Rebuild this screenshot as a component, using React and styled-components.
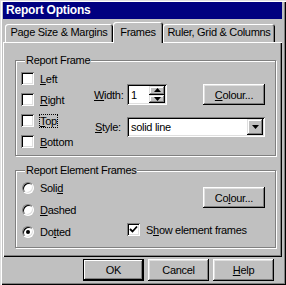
import React from 'react';
import styled, { createGlobalStyle } from 'styled-components';

const GlobalStyle = createGlobalStyle`
  html, body {
    margin: 0;
    padding: 0;
    background: #c0c0c0;
  }
  body {
    font-family: 'Liberation Sans', Arial, sans-serif;
    font-size: 11px;
    letter-spacing: -0.3px;
    color: #000;
  }
`;

// window chrome
const Window = styled.div`
  width: 286px;
  height: 285px;
  box-sizing: border-box;
  padding: 2px 4px 0 3px;
  background: #c0c0c0;
  box-shadow: inset 1px 1px #dfdfdf, inset 2px 2px #fff, inset -1px -1px #000, inset -2px -2px #808080;
  overflow: hidden;
`;

const TitleBar = styled.div`
  height: 17px;
  line-height: 17px;
  padding-left: 3px;
  background: #000080;
  color: #fff;
  font-weight: bold;
  font-size: 12px;
  letter-spacing: -0.2px;
`;

const TabStrip = styled.div`
  display: flex;
  align-items: flex-end;
  height: 23px;
  padding-left: 2px;
`;

const Tab = styled.div`
  position: relative;
  width: ${p => p.$w}px;
  height: ${p => (p.$active ? 21 : 18)}px;
  margin-bottom: ${p => (p.$active ? -1 : 0)}px;
  z-index: ${p => (p.$active ? 1 : 0)};
  box-sizing: border-box;
  display: flex;
  align-items: flex-end;
  justify-content: center;
  padding-bottom: ${p => (p.$active ? 4 : 3)}px;
  line-height: 13px;
  background: #c0c0c0;
  border-radius: 3px 3px 0 0;
  box-shadow: inset 1px 1px #fff, inset -1px 0 #000, inset -2px 0 #808080;
  white-space: nowrap;
`;

const Panel = styled.div`
  height: 215px;
  box-sizing: border-box;
  padding: 12px 6px 0 12px;
  box-shadow: inset 1px 1px #fff, inset -1px -1px #000, inset -2px -2px #808080;
  display: flex;
  flex-direction: column;
  gap: 8px;
`;

// group boxes
const Group = styled.fieldset`
  margin: 0;
  padding: 0;
  min-width: 0;
  border: 1px solid #808080;
  box-shadow: 1px 1px 0 #fff, inset 1px 1px 0 #fff;
`;

const Legend = styled.legend`
  margin-left: 9px;
  padding: 0 1px;
  line-height: 13px;
  background: #c0c0c0;
`;

const GroupBody = styled.div`
  display: flex;
  padding: ${p => p.$pad};
`;

const Column = styled.div`
  width: ${p => p.$w}px;
  display: flex;
  flex-direction: column;
  align-items: ${p => p.$align || 'stretch'};
  padding-top: ${p => p.$pt || 0}px;
`;

const OptionRow = styled.label`
  display: flex;
  align-items: center;
  height: ${p => p.$h}px;
  gap: ${p => p.$gap}px;
  align-self: flex-start;
  margin-top: ${p => p.$mt || 0}px;
`;

const Focus = styled.span`
  outline: 1px dotted #000;
  outline-offset: 0;
`;

// sunken controls
const sunken = `
  background: #fff;
  box-shadow: inset 1px 1px #808080, inset -1px -1px #fff, inset 2px 2px #000, inset -2px -2px #dfdfdf;
`;

const CheckBox = styled.span`
  ${sunken}
  width: 13px;
  height: 13px;
  flex: none;
  display: flex;
  align-items: center;
  justify-content: center;
`;

const Radio = styled.span`
  width: 12px;
  height: 12px;
  flex: none;
  box-sizing: border-box;
  border-radius: 50%;
  background: #fff;
  border: 1px solid;
  border-color: #808080 #fff #fff #808080;
  box-shadow: inset 1px 1px #000, inset -1px -1px #dfdfdf;
  display: flex;
  align-items: center;
  justify-content: center;

  &::after {
    content: '';
    width: 4px;
    height: 4px;
    border-radius: 50%;
    background: #000;
    display: ${p => (p.$on ? 'block' : 'none')};
  }
`;

const FieldRow = styled.div`
  display: flex;
  align-items: center;
  margin-top: ${p => p.$mt || 0}px;
`;

const FieldLabel = styled.span`
  width: ${p => p.$w}px;
  padding-left: ${p => p.$pl || 0}px;
  box-sizing: border-box;
  flex: none;
`;

const Field = styled.div`
  ${sunken}
  width: ${p => p.$w}px;
  height: ${p => p.$h}px;
  box-sizing: border-box;
  padding: 2px 2px 2px 4px;
  display: flex;
  align-items: center;
  justify-content: space-between;
`;

const SpinButtons = styled.div`
  display: flex;
  flex-direction: column;
  width: 16px;
  height: 100%;
`;

const SmallButton = styled.div`
  flex: ${p => (p.$fixed ? 'none' : 1)};
  width: 16px;
  height: ${p => (p.$fixed ? '16px' : 'auto')};
  background: #c0c0c0;
  display: flex;
  align-items: center;
  justify-content: center;
  box-shadow: inset -1px -1px #000, inset 1px 1px #dfdfdf, inset -2px -2px #808080, inset 2px 2px #fff;
`;

const Button = styled.button`
  width: ${p => p.$w}px;
  height: ${p => p.$h}px;
  margin: 0 0 0 ${p => (p.$push ? 'auto' : '0')};
  padding: 0;
  border: none;
  background: #c0c0c0;
  font: inherit;
  letter-spacing: inherit;
  color: #000;
  box-shadow: ${p =>
    p.$default
      ? 'inset 0 0 0 1px #000, inset -2px -2px #000, inset 2px 2px #fff, inset -3px -3px #808080'
      : 'inset -1px -1px #000, inset 1px 1px #fff, inset -2px -2px #808080, inset 2px 2px #dfdfdf'};
`;

const ButtonBar = styled.div`
  display: flex;
  justify-content: flex-end;
  gap: 4px;
  padding: 2px 8px 0 0;
`;

const Up = () => (
  <svg width="7" height="4" viewBox="0 0 7 4"><polygon points="3.5,0 7,4 0,4" fill="#000" /></svg>
);

const Down = () => (
  <svg width="7" height="4" viewBox="0 0 7 4"><polygon points="0,0 7,0 3.5,4" fill="#000" /></svg>
);

const Check = () => (
  <svg width="9" height="9" viewBox="0 0 9 9">
    <polyline points="1,4 3.5,6.5 8,1.5" fill="none" stroke="#000" strokeWidth="1.8" />
  </svg>
);

const frameSides = [
  { key: 'l', before: '', u: 'L', after: 'eft' },
  { key: 'r', before: '', u: 'R', after: 'ight' },
  { key: 't', before: '', u: 'T', after: 'op', focus: true },
  { key: 'b', before: '', u: 'B', after: 'ottom' },
];

const elementFrames = [
  { key: 's', before: 'Soli', u: 'd', after: '' },
  { key: 'd', before: '', u: 'D', after: 'ashed' },
  { key: 'o', before: 'Do', u: 't', after: 'ted', on: true },
];

const Mnemonic = ({ before, u, after }) => (
  <span>{before}<u>{u}</u>{after}</span>
);

export default function App() {
  return (
    <>
      <GlobalStyle />
      <Window>
        <TitleBar>Report Options</TitleBar>
        <TabStrip>
          <Tab $w={108}>Page Size &amp; Margins</Tab>
          <Tab $w={50} $active>Frames</Tab>
          <Tab $w={112}>Ruler, Grid &amp; Columns</Tab>
        </TabStrip>
        <Panel>
          <Group>
            <Legend>Report Frame</Legend>
            <GroupBody $pad="1px 0 3px 5px">
              <Column $w={73}>
                {frameSides.map(s => (
                  <OptionRow key={s.key} $h={21} $gap={6}>
                    <CheckBox />
                    {s.focus ? (
                      <Focus><Mnemonic {...s} /></Focus>
                    ) : (
                      <Mnemonic {...s} />
                    )}
                  </OptionRow>
                ))}
              </Column>
              <Column $w={171} $pt={16}>
                <FieldRow>
                  <FieldLabel $w={33}><u>W</u>idth:</FieldLabel>
                  <Field $w={40} $h={21}>
                    <span>1</span>
                    <SpinButtons>
                      <SmallButton><Up /></SmallButton>
                      <SmallButton><Down /></SmallButton>
                    </SpinButtons>
                  </Field>
                  <Button $w={62} $h={21} $push>
                    <u>C</u>olour...
                  </Button>
                </FieldRow>
                <FieldRow $mt={12}>
                  <FieldLabel $w={33} $pl={1}><u>S</u>tyle:</FieldLabel>
                  <Field $w={138} $h={20}>
                    <span>solid line</span>
                    <SmallButton $fixed><Down /></SmallButton>
                  </Field>
                </FieldRow>
              </Column>
            </GroupBody>
          </Group>
          <Group>
            <Legend>Report Element Frames</Legend>
            <GroupBody $pad="0 0 4px 6px">
              <Column $w={105}>
                {elementFrames.map(r => (
                  <OptionRow key={r.key} $h={22} $gap={6}>
                    <Radio $on={r.on} />
                    <Mnemonic {...r} />
                  </OptionRow>
                ))}
              </Column>
              <Column $w={138} $pt={10} $align="flex-end">
                <Button $w={62} $h={21}>
                  Co<u>l</u>our...
                </Button>
                <OptionRow $h={13} $gap={6} $mt={15}>
                  <CheckBox><Check /></CheckBox>
                  <span>S<u>h</u>ow element frames</span>
                </OptionRow>
              </Column>
            </GroupBody>
          </Group>
        </Panel>
        <ButtonBar>
          <Button $w={61} $h={22} $default>OK</Button>
          <Button $w={61} $h={22}>Cancel</Button>
          <Button $w={61} $h={22}><u>H</u>elp</Button>
        </ButtonBar>
      </Window>
    </>
  );
}
